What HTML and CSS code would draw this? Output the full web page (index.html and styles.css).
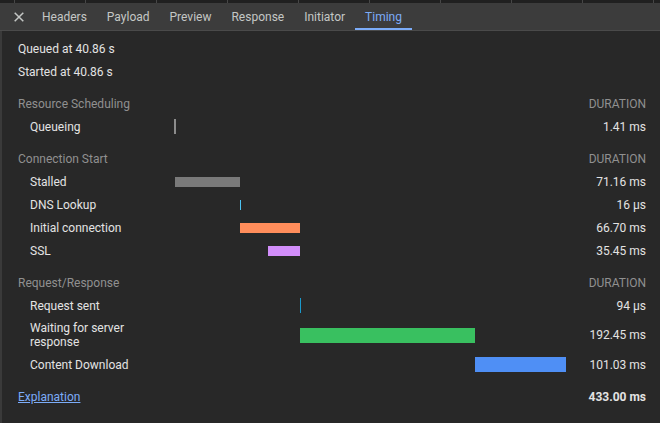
FILE: index.html
```html
<!DOCTYPE html>
<html lang="en">
<head>
<meta charset="utf-8">
<title>Timing</title>
<link rel="stylesheet" href="styles.css">
</head>
<body>
<div class="strip"></div>
<div class="tabbar">
  <div class="close"><svg width="10" height="10" viewBox="0 0 10 10"><path d="M0.7 0.7L9.3 9.3M9.3 0.7L0.7 9.3" stroke="#c4c7c5" stroke-width="1.5" fill="none"/></svg></div>
  <div class="tab">Headers</div>
  <div class="tab">Payload</div>
  <div class="tab">Preview</div>
  <div class="tab">Response</div>
  <div class="tab">Initiator</div>
  <div class="tab active">Timing</div>
</div>
<div class="content">
  <div class="info">Queued at 40.86 s</div>
  <div class="info">Started at 40.86 s</div>

  <div class="group first">
    <div class="row head"><span class="htitle">Resource Scheduling</span><span class="dur">DURATION</span></div>
    <div class="row"><span class="label">Queueing</span><div class="track"><span class="bar tall queueing" style="margin-left:0px;width:2px"></span></div><span class="dur">1.41 ms</span></div>
  </div>

  <div class="group">
    <div class="row head"><span class="htitle">Connection Start</span><span class="dur">DURATION</span></div>
    <div class="row"><span class="label">Stalled</span><div class="track"><span class="bar stalled" style="margin-left:1px;width:65px"></span></div><span class="dur">71.16 ms</span></div>
    <div class="row"><span class="label">DNS Lookup</span><div class="track"><span class="bar dns" style="margin-left:66px;width:1px"></span></div><span class="dur">16 µs</span></div>
    <div class="row"><span class="label">Initial connection</span><div class="track"><span class="bar connecting" style="margin-left:66px;width:60px"></span></div><span class="dur">66.70 ms</span></div>
    <div class="row"><span class="label">SSL</span><div class="track"><span class="bar ssl" style="margin-left:94px;width:32px"></span></div><span class="dur">35.45 ms</span></div>
  </div>

  <div class="group">
    <div class="row head"><span class="htitle">Request/Response</span><span class="dur">DURATION</span></div>
    <div class="row"><span class="label">Request sent</span><div class="track"><span class="bar tall sending" style="margin-left:126px;width:1px"></span></div><span class="dur">94 µs</span></div>
    <div class="row two"><span class="label">Waiting for server response</span><div class="track"><span class="bar tall waiting" style="margin-left:126px;width:175px"></span></div><span class="dur">192.45 ms</span></div>
    <div class="row"><span class="label">Content Download</span><div class="track"><span class="bar tall download" style="margin-left:301px;width:91px"></span></div><span class="dur">101.03 ms</span></div>
  </div>

  <div class="group">
    <div class="row head"><a class="link" href="#">Explanation</a><span class="dur total">433.00 ms</span></div>
  </div>
</div>
</body>
</html>
```

FILE: styles.css
```css
html, body {
  margin: 0;
  padding: 0;
  background: #282828;
}
body {
  font-family: Roboto, "Noto Sans", sans-serif;
  font-size: 12px;
  color: #e3e3e3;
  height: 100vh;
  display: flex;
  flex-direction: column;
  overflow: hidden;
}
.strip {
  flex: none;
  height: 3px;
  background-color: #202020;
  background-image: repeating-linear-gradient(to right, transparent 0, transparent 14px, #474747 14px, #474747 15px, transparent 15px, transparent 71px);
}
.tabbar {
  flex: none;
  display: flex;
  height: 27px;
  background: #3c3c3c;
  border-bottom: 1px solid #4a4a4a;
}
.close {
  width: 32px;
  display: flex;
  align-items: center;
  padding-left: 14px;
  box-sizing: border-box;
}
.close svg { display: block; }
.tab {
  display: flex;
  align-items: center;
  padding: 0 10px;
  color: #c4c7c5;
  white-space: nowrap;
}
.tab.active {
  color: #7cacf8;
  box-shadow: inset 0 -2px 0 #7cacf8;
}
.content {
  flex: 1;
  min-height: 0;
  border-left: 2px solid #3a3a3a;
  padding: 7px 14px 0 16px;
}
.info {
  height: 23px;
  line-height: 23px;
}
.group {
  margin-top: 9px;
}
.group.first {
  margin-top: 8px;
}
.row {
  display: grid;
  grid-template-columns: 156px 392px 1fr;
  align-items: center;
  height: 23px;
}
.row.two {
  height: 36px;
}
.row.two .label {
  line-height: 14px;
}
.head .htitle, .head .link {
  grid-column: 1 / 3;
  color: #909090;
}
.head .dur {
  grid-column: 3;
}
.label {
  padding-left: 12px;
  padding-right: 6px;
}
.track {
  display: flex;
  align-items: center;
  height: 100%;
}
.bar {
  display: block;
  flex: none;
  height: 10px;
}
.bar.tall { height: 15px; }
.queueing { background: #8c8c8c; }
.stalled { background: #7a7a7a; }
.dns { background: #4cc3f2; }
.connecting { background: #ff8d5b; }
.ssl { background: #d28efa; }
.sending { background: #1a99cc; }
.waiting { background: #39c060; }
.download { background: #4f8ff5; }
.dur {
  text-align: right;
  white-space: nowrap;
}
.head .dur { color: #909090; }
.head .dur.total {
  color: #e3e3e3;
  font-weight: bold;
}
.head .link {
  color: #7cacf8;
  text-decoration: underline;
  justify-self: start;
}
```
